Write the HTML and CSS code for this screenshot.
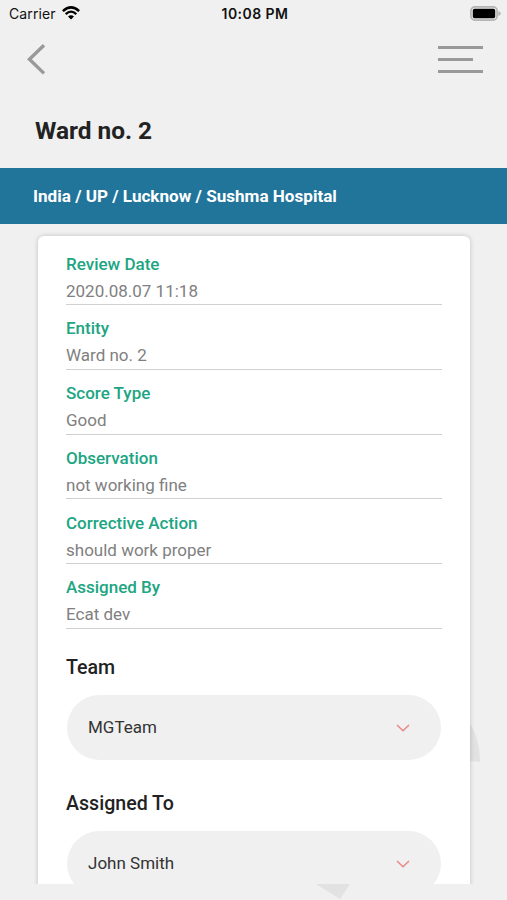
FILE: index.html
```html
<!DOCTYPE html>
<html lang="en">
<head>
  <meta charset="UTF-8">
  <meta name="viewport" content="width=device-width, initial-scale=1.0">
  <title>Ward no. 2</title>
  <link rel="stylesheet" href="styles.css">
</head>
<body>
  <div class="screen">
    <svg class="watermark" viewBox="0 0 507 900">
      <path d="M470 723 Q480 740 480 762 L470 761 Z"/>
      <path d="M316 884 H350 L340 899 Z"/>
    </svg>

    <div class="status-bar">
      <div class="carrier">
        <span>Carrier</span>
        <svg width="18" height="14" viewBox="0 0 18 14">
          <path d="M0.9 5.2 Q9 -2.4 17.1 5.2" fill="none" stroke="#000" stroke-width="2.5"/>
          <path d="M3.7 8.1 Q9 3.1 14.3 8.1" fill="none" stroke="#000" stroke-width="2.3"/>
          <path d="M6 10.4 Q9 7.9 12 10.4 L9 13.5 Z"/>
        </svg>
      </div>
      <div class="time">10:08 PM</div>
      <div class="battery">
        <svg width="31" height="15" viewBox="0 0 31 15">
          <rect x="0.9" y="0.9" width="26.2" height="13.2" rx="4" fill="#eee" stroke="#b4b4b4" stroke-width="1.7"/>
          <rect x="2.8" y="2.8" width="22.4" height="9.4" rx="1.8"/>
          <path d="M28.3 5 Q30.8 5.8 30.8 7.5 Q30.8 9.2 28.3 10 Z" fill="#b4b4b4"/>
        </svg>
      </div>
    </div>

    <div class="nav">
      <svg width="19" height="31" viewBox="0 0 19 31">
        <path d="M17 1.2 L2.4 15.3 L17 29.4" fill="none" stroke="#999" stroke-width="3.4"/>
      </svg>
      <div class="menu">
        <span></span>
        <span class="short"></span>
        <span></span>
      </div>
    </div>

    <h1>Ward no. 2</h1>
    <div class="breadcrumb">India / UP / Lucknow / Sushma Hospital</div>

    <div class="content">
      <div class="card">
        <div class="field">
          <label>Review Date</label>
          <p>2020.08.07 11:18</p>
        </div>
        <div class="field">
          <label>Entity</label>
          <p>Ward no. 2</p>
        </div>
        <div class="field">
          <label>Score Type</label>
          <p>Good</p>
        </div>
        <div class="field">
          <label>Observation</label>
          <p>not working fine</p>
        </div>
        <div class="field">
          <label>Corrective Action</label>
          <p>should work proper</p>
        </div>
        <div class="field">
          <label>Assigned By</label>
          <p>Ecat dev</p>
        </div>

        <h2>Team</h2>
        <div class="select">
          <span>MGTeam</span>
          <svg width="14" height="8" viewBox="0 0 14 8">
            <path d="M1 1 L7 6.7 L13 1" fill="none" stroke="#ec8783" stroke-width="1.5"/>
          </svg>
        </div>

        <h2>Assigned To</h2>
        <div class="select">
          <span>John Smith</span>
          <svg width="14" height="8" viewBox="0 0 14 8">
            <path d="M1 1 L7 6.7 L13 1" fill="none" stroke="#ec8783" stroke-width="1.5"/>
          </svg>
        </div>
      </div>
    </div>
  </div>
</body>
</html>
```
FILE: styles.css
```css
* {
  box-sizing: border-box;
}
body {
  margin: 0;
  font-family: Roboto, sans-serif;
  background-color: #f0f0f0;
}
.screen {
  position: relative;
  height: 900px;
  overflow: hidden;
}
/* faint background shapes showing around the card */
.watermark {
  position: absolute;
  top: 0;
  left: 0;
  width: 507px;
  height: 900px;
  fill: #e2e2e2;
}
.status-bar {
  display: grid;
  grid-template-columns: 1fr auto 1fr;
  align-items: center;
  height: 28px;
  padding: 0 6px 2px 9px;
  font-family: Inter, sans-serif;
  font-size: 14px;
  color: #111;
}
.carrier {
  display: flex;
  align-items: center;
  gap: 6px;
  letter-spacing: 0.1px;
}
.time {
  font-weight: 600;
  letter-spacing: 0.45px;
}
.battery {
  display: flex;
  justify-content: flex-end;
}
.nav {
  display: flex;
  justify-content: space-between;
  padding: 16px 24px 0 27px;
  height: 62px;
}
.menu {
  display: flex;
  flex-direction: column;
  gap: 9px;
  padding-top: 2px;
  width: 45px;
}
.menu span {
  height: 3px;
  background: #999;
}
.menu .short {
  width: 35px;
}
h1 {
  margin: 0;
  height: 78px;
  padding-left: 35px;
  font-size: 24.4px;
  font-weight: 700;
  line-height: 82px;
  color: #222;
}
.breadcrumb {
  height: 56px;
  padding-left: 33px;
  background-color: #21759b;
  color: #fff;
  font-size: 17.1px;
  font-weight: 700;
  line-height: 57px;
}
.content {
  height: 660px;
  padding: 12px 37px 0 38px;
  overflow: hidden;
}
.card {
  position: relative;
  height: 700px;
  padding: 4.4px 28px 0;
  background: #fff;
  border-radius: 6px;
  box-shadow: 0 0 5px rgba(0,0,0,0.2);
}
.field {
  height: 64.75px;
  padding-top: 10.3px;
  border-bottom: 1.5px solid #d0d0d0;
}
.field label {
  display: block;
  font-size: 17px;
  font-weight: 500;
  line-height: 27px;
  color: #20a583;
}
.field p {
  margin: 0;
  font-size: 17px;
  line-height: 27px;
  color: #808080;
}
h2 {
  margin: 0;
  height: 66px;
  font-size: 19.6px;
  font-weight: 500;
  line-height: 78px;
  color: #222;
}
.select {
  display: flex;
  justify-content: space-between;
  align-items: center;
  height: 65px;
  margin: 0 1px 5.6px;
  padding: 0 31px 1px 21px;
  border-radius: 33px;
  background: #f0f0f0;
  font-size: 17px;
  color: #333;
}
.select svg {
  margin-top: 2px;
}
```
